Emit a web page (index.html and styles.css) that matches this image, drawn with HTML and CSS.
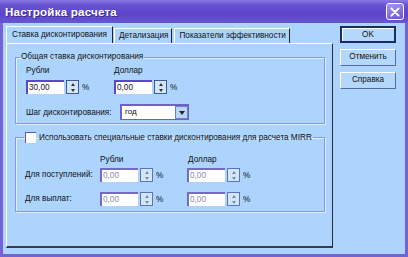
FILE: index.html
```html
<!DOCTYPE html>
<html lang="ru">
<head>
<meta charset="utf-8">
<link rel="stylesheet" href="styles.css">
</head>
<body>
<div class="window">
  <div class="titlebar">
    <span class="title">Настройка расчета</span>
    <span class="close"><svg width="18" height="17" viewBox="0 0 18 17"><path d="M5 4 L13 12 M13 4 L5 12" stroke="#fff" stroke-width="2.2" stroke-linecap="round"/></svg></span>
  </div>
  <div class="client">
    <div class="tabctl">
      <div class="tabs">
        <div class="tab sel">Ставка дисконтирования</div>
        <div class="tab">Детализация</div>
        <div class="tab">Показатели эффективности</div>
      </div>
      <div class="panel">
        <fieldset class="grp g1">
          <legend>Общая ставка дисконтирования</legend>
          <div class="cols">
            <div class="col">
              <div class="lbl">Рубли</div>
              <div class="spin"><span class="inp">30,00</span><span class="sb"><i class="up"></i><i class="dn"></i></span><span class="pct">%</span></div>
            </div>
            <div class="col">
              <div class="lbl">Доллар</div>
              <div class="spin"><span class="inp">0,00</span><span class="sb"><i class="up"></i><i class="dn"></i></span><span class="pct">%</span></div>
            </div>
          </div>
          <div class="steprow">
            <span class="steplbl">Шаг дисконтирования:</span>
            <span class="combo"><span class="cval">год</span><span class="cbtn"><i class="dn"></i></span></span>
          </div>
        </fieldset>
        <fieldset class="grp g2">
          <legend><span class="chk"></span>Использовать специальные ставки дисконтирования для расчета MIRR</legend>
          <div class="hdr"><span class="lbl">Рубли</span><span class="lbl">Доллар</span></div>
          <div class="grid">
            <span class="rl">Для поступлений:</span>
            <div class="spin dis"><span class="inp">0,00</span><span class="sb"><i class="up"></i><i class="dn"></i></span><span class="pct">%</span></div>
            <div class="spin dis"><span class="inp">0,00</span><span class="sb"><i class="up"></i><i class="dn"></i></span><span class="pct">%</span></div>
            <span class="rl">Для выплат:</span>
            <div class="spin dis"><span class="inp">0,00</span><span class="sb"><i class="up"></i><i class="dn"></i></span><span class="pct">%</span></div>
            <div class="spin dis"><span class="inp">0,00</span><span class="sb"><i class="up"></i><i class="dn"></i></span><span class="pct">%</span></div>
          </div>
        </fieldset>
      </div>
    </div>
    <div class="buttons">
      <div class="btn def">OK</div>
      <div class="btn">Отменить</div>
      <div class="btn">Справка</div>
    </div>
  </div>
</div>
</body>
</html>
```
FILE: styles.css
```css
* { box-sizing: border-box; }
body { margin: 0; background: #7b68d8; font-family: "Liberation Sans", Arial, sans-serif; font-size: 8.2px; color: #111; }
.window { width: 408px; height: 257px; background: #7563d6; display: flex; flex-direction: column; }
.titlebar { height: 23px; display: flex; align-items: center; justify-content: space-between; padding: 0 4px 0 5px;
  background: linear-gradient(180deg, #8a7ae6 0%, #6a54d2 20%, #5c44c8 60%, #6a56d2 100%); }
.title { color: #fff; font-weight: bold; font-size: 11.6px; letter-spacing: 0.2px; text-shadow: 1px 1px 0 #3a2a90; }
.close { width: 18px; height: 17px; border: 1px solid #fff; border-radius: 3px; background: linear-gradient(160deg,#a696f0,#6a54d0); display: flex; }
.client { flex: 1; margin: 0 3px 3px 3px; background: #acd4fc; display: flex; padding: 3px 0 6px 3px; }
.tabctl { width: 327px; display: flex; flex-direction: column; }
.tabs { display: flex; height: 17px; align-items: flex-end; padding-left: 2px; }
.tab { height: 15px; padding: 0 3px 0 4px; line-height: 14px; border-top: 1px solid #fff; border-left: 1px solid #fff; border-right: 1px solid #222; margin-right: 2px; white-space: nowrap; }
.tab.sel { height: 17px; line-height: 16px; margin-left: -2px; padding: 0 5px 0 5px; margin-right: 1px; }
.panel { flex: 1; border-left: 1px solid #fff; border-top: 1px solid #fff; border-right: 1px solid #2a2a3a; border-bottom: 2px solid #3a3a4a; padding: 8px 8px 0 8px; }
.grp { margin: 0; border: 1px solid #8898d8; box-shadow: 1px 1px 0 #dceeff, inset 1px 1px 0 #dceeff; padding: 0; width: 310px; }
.grp legend { padding: 0 1px; line-height: 10px; display: flex; align-items: center; white-space: nowrap; }
.g1 legend { margin-left: -6px; }
.g2 legend { margin-left: -1px; }
.g1 { height: 72px; padding: 3px 0 0 10px; }
.cols { display: flex; }
.col { width: 88px; }
.lbl { display: block; height: 12px; line-height: 12px; }
.col .spin { margin-top: 3px; }
.spin { display: flex; align-items: center; height: 14px; }
.inp { width: 38px; height: 14px; background: #fff; border-top: 2px solid #5a48c8; border-left: 2px solid #5a48c8; padding-left: 1px; line-height: 11px; }
.sb { width: 13px; height: 14px; margin-left: 2px; border: 1px solid #3c5aa0; background: #d4e6fc; display: flex; flex-direction: column; justify-content: space-around; align-items: center; }
.sb i, .cbtn i { display: block; width: 0; height: 0; border-left: 2.5px solid transparent; border-right: 2.5px solid transparent; }
.sb .up { border-bottom: 3px solid #333; }
.sb .dn, .cbtn .dn { border-top: 3px solid #333; }
.pct { margin-left: 3px; }
.steprow { display: flex; align-items: center; margin-top: 10px; }
.steplbl { width: 94px; white-space: nowrap; }
.combo { width: 69px; height: 16px; background: #fff; border: 1px solid #7060c8; border-top-width: 2px; border-left-width: 2px; display: flex; }
.cval { flex: 1; padding-left: 3px; line-height: 12px; font-size: 8px; }
.cbtn { width: 13px; background: #b8d6fa; border: 1px solid #6a80c8; display: flex; align-items: center; justify-content: center; }
.cbtn .dn { border-left-width: 3px; border-right-width: 3px; border-top-width: 4px; border-top-color: #222; }
.g2 { margin-top: 8px; height: 80px; padding: 11px 0 0 9px; }
.chk { width: 11px; height: 11px; background: #fff; border-top: 1px solid #6a50c8; border-left: 1px solid #6a50c8; margin-right: 3px; display: inline-block; }
.hdr { display: flex; padding-left: 75px; margin-bottom: 2px; }
.hdr .lbl { width: 87px; }
.hdr .lbl + .lbl { padding-left: 1px; }
.grid { display: grid; grid-template-columns: 75px 87px 87px; grid-template-rows: 14px 14px; row-gap: 10px; align-items: center; }
.rl { line-height: 14px; white-space: nowrap; }
.dis .inp { color: #8890a8; border-color: #7468c8; }
.dis .sb { border-color: #5a74b8; }
.dis .sb i { border-bottom-color: #7a8aa8; border-top-color: #7a8aa8; }
.buttons { display: flex; flex-direction: column; margin-left: 7px; gap: 6px; }
.btn { width: 56px; height: 17px; text-align: center; line-height: 14px; background: #b4d8fc; border-top: 1px solid #fff; border-left: 1px solid #fff; border-right: 1px solid #5a6aa0; border-bottom: 1px solid #5a6aa0; }
.btn.def { border: 2px solid #1a2a6a; box-shadow: inset 1px 1px 0 #fff; line-height: 13px; }
```
